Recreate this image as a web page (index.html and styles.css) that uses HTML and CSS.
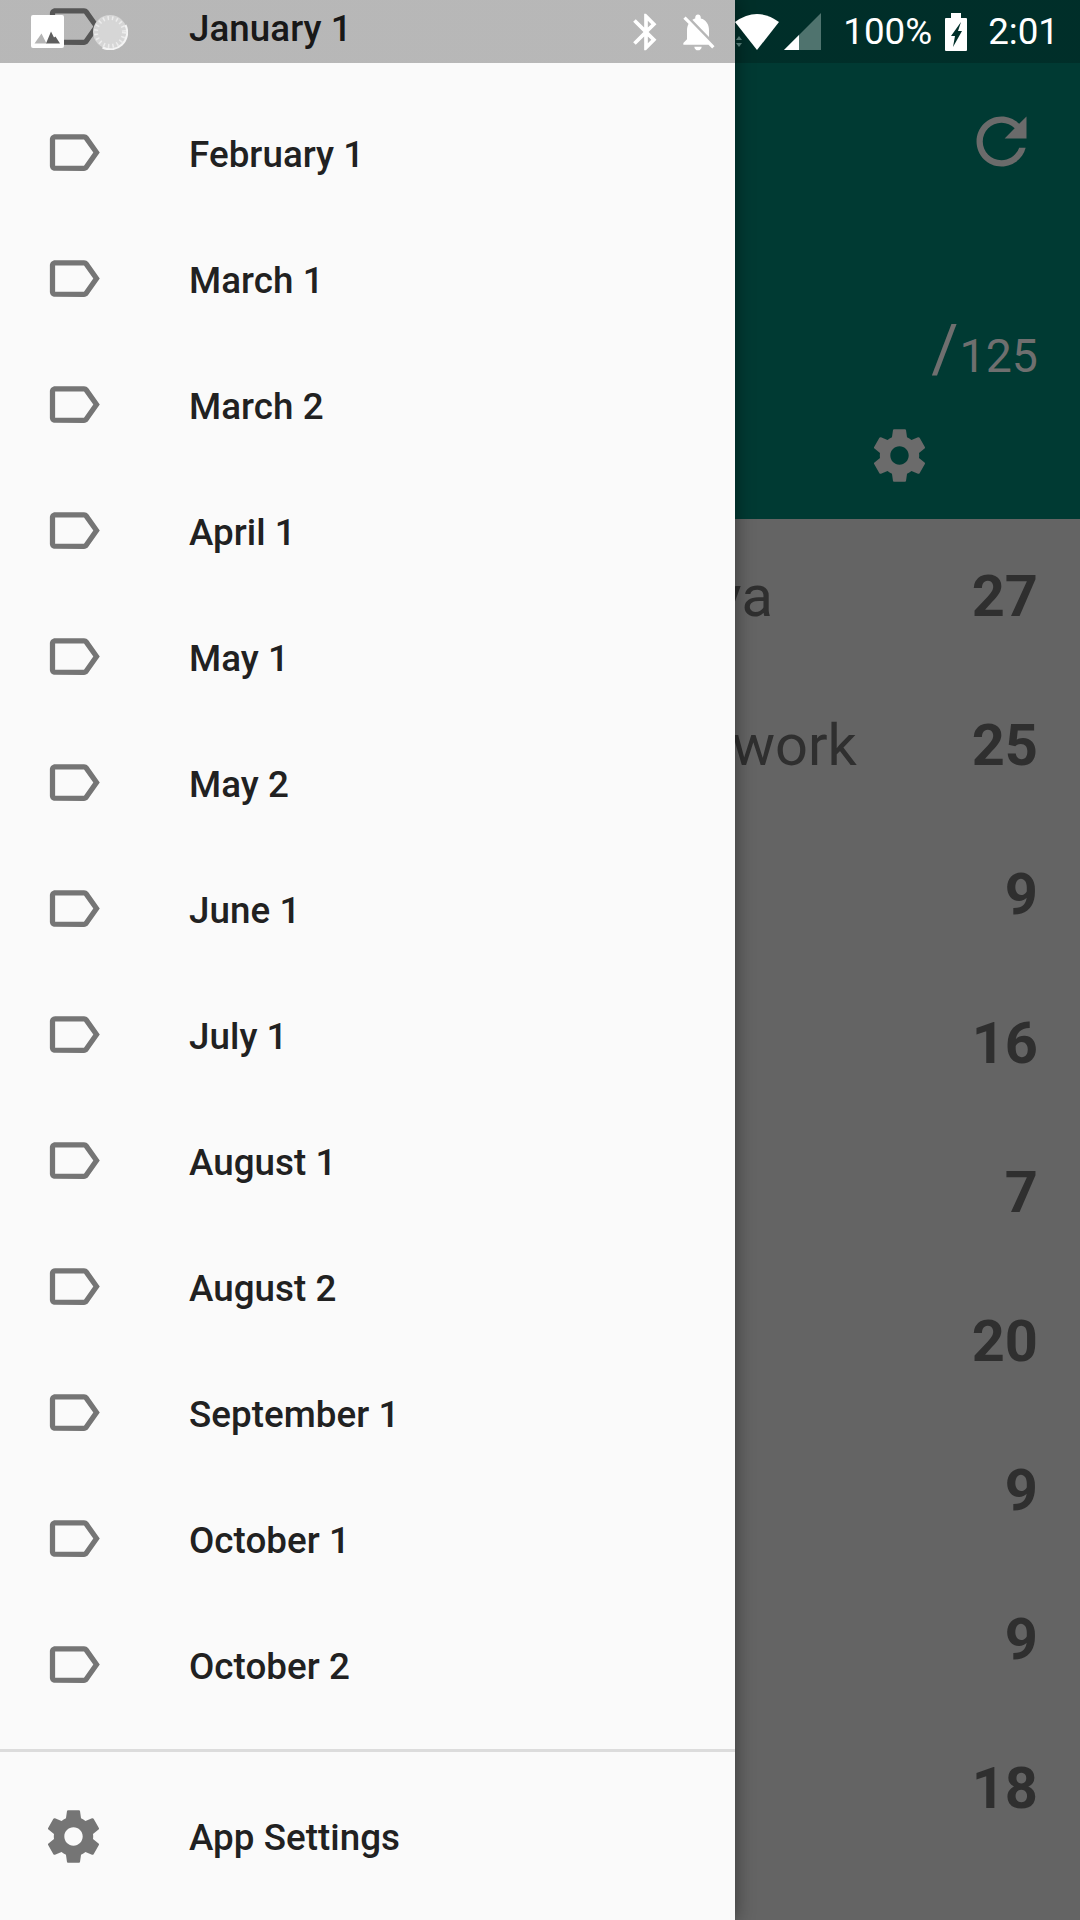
FILE: index.html
```html
<!DOCTYPE html>
<html lang="en">
<head>
<meta charset="utf-8">
<title>Drawer</title>
<link rel="stylesheet" href="styles.css">
</head>
<body>
<div class="screen">
  <main class="app">
    <header class="hero">
      <svg class="refresh" viewBox="0 0 24 24"><path d="M17.65 6.35C16.2 4.9 14.21 4 12 4c-4.42 0-7.99 3.58-7.99 8s3.57 8 7.99 8c3.73 0 6.84-2.55 7.73-6h-2.08c-.82 2.33-3.04 4-5.65 4-3.31 0-6-2.69-6-6s2.69-6 6-6c1.66 0 3.14.69 4.22 1.78L13 11h7V4l-2.35 2.35z"/></svg>
      <div class="ratio"><span class="slash">/</span><span class="total">125</span></div>
      <svg class="hero-gear" viewBox="0 0 24 24"><use href="#gear"/></svg>
    </header>
    <ul class="decks">
      <li class="deck"><span class="deck-name deck-name-a">Java</span><span class="deck-count">27</span></li>
      <li class="deck"><span class="deck-name deck-name-b">Network</span><span class="deck-count">25</span></li>
      <li class="deck"><span class="deck-count">9</span></li>
      <li class="deck"><span class="deck-count">16</span></li>
      <li class="deck"><span class="deck-count">7</span></li>
      <li class="deck"><span class="deck-count">20</span></li>
      <li class="deck"><span class="deck-count">9</span></li>
      <li class="deck"><span class="deck-count">9</span></li>
      <li class="deck"><span class="deck-count">18</span></li>
    </ul>
  </main>

  <nav class="drawer">
    <svg class="defs" width="0" height="0">
      <defs>
        <path id="gear" d="M19.43 12.98c.04-.32.07-.64.07-.98s-.03-.66-.07-.98l2.11-1.65c.19-.15.24-.42.12-.64l-2-3.46c-.12-.22-.39-.3-.61-.22l-2.49 1c-.52-.4-1.08-.73-1.69-.98l-.38-2.65C14.46 2.18 14.25 2 14 2h-4c-.25 0-.46.18-.49.42l-.38 2.65c-.61.25-1.17.59-1.69.98l-2.49-1c-.23-.09-.49 0-.61.22l-2 3.46c-.13.22-.07.49.12.64l2.11 1.65c-.04.32-.07.65-.07.98s.03.66.07.98l-2.11 1.65c-.19.15-.24.42-.12.64l2 3.46c.12.22.39.3.61.22l2.49-1c.52.4 1.08.73 1.69.98l.38 2.65c.03.24.24.42.49.42h4c.25 0 .46-.18.49-.42l.38-2.65c.61-.25 1.17-.59 1.69-.98l2.49 1c.23.09.49 0 .61-.22l2-3.46c.12-.22.07-.49-.12-.64l-2.11-1.65zM12 15.5c-1.93 0-3.5-1.57-3.5-3.5s1.57-3.5 3.5-3.5 3.5 1.57 3.5 3.5-1.57 3.5-3.5 3.5z"/>
        <path id="label" d="M17.63 5.84C17.27 5.33 16.67 5 16 5L5 5.01C3.9 5.01 3 5.9 3 7v10c0 1.1.9 1.99 2 1.99L16 19c.67 0 1.27-.33 1.63-.84L22 12l-4.37-6.16zM16 17H5V7h11l3.55 5L16 17z"/>
      </defs>
    </svg>
    <ul class="nav-list">
      <li class="nav-row"><svg class="nav-icon" viewBox="0 0 24 24"><use href="#label"/></svg><span class="nav-label">January 1</span></li>
      <li class="nav-row"><svg class="nav-icon" viewBox="0 0 24 24"><use href="#label"/></svg><span class="nav-label">February 1</span></li>
      <li class="nav-row"><svg class="nav-icon" viewBox="0 0 24 24"><use href="#label"/></svg><span class="nav-label">March 1</span></li>
      <li class="nav-row"><svg class="nav-icon" viewBox="0 0 24 24"><use href="#label"/></svg><span class="nav-label">March 2</span></li>
      <li class="nav-row"><svg class="nav-icon" viewBox="0 0 24 24"><use href="#label"/></svg><span class="nav-label">April 1</span></li>
      <li class="nav-row"><svg class="nav-icon" viewBox="0 0 24 24"><use href="#label"/></svg><span class="nav-label">May 1</span></li>
      <li class="nav-row"><svg class="nav-icon" viewBox="0 0 24 24"><use href="#label"/></svg><span class="nav-label">May 2</span></li>
      <li class="nav-row"><svg class="nav-icon" viewBox="0 0 24 24"><use href="#label"/></svg><span class="nav-label">June 1</span></li>
      <li class="nav-row"><svg class="nav-icon" viewBox="0 0 24 24"><use href="#label"/></svg><span class="nav-label">July 1</span></li>
      <li class="nav-row"><svg class="nav-icon" viewBox="0 0 24 24"><use href="#label"/></svg><span class="nav-label">August 1</span></li>
      <li class="nav-row"><svg class="nav-icon" viewBox="0 0 24 24"><use href="#label"/></svg><span class="nav-label">August 2</span></li>
      <li class="nav-row"><svg class="nav-icon" viewBox="0 0 24 24"><use href="#label"/></svg><span class="nav-label">September 1</span></li>
      <li class="nav-row"><svg class="nav-icon" viewBox="0 0 24 24"><use href="#label"/></svg><span class="nav-label">October 1</span></li>
      <li class="nav-row"><svg class="nav-icon" viewBox="0 0 24 24"><use href="#label"/></svg><span class="nav-label">October 2</span></li>
    </ul>
    <div class="nav-footer">
      <div class="nav-row"><svg class="nav-icon" viewBox="0 0 24 24"><use href="#gear"/></svg><span class="nav-label nav-label-footer">App Settings</span></div>
    </div>
  </nav>

  <div class="statusbar">
    <svg class="thumb" viewBox="0 0 33 33"><rect width="33" height="33" rx="2" fill="#fff"/><path d="M3.500 28.500l7-10 5 10z" fill="#b5b5b5"/><path d="M15 28.500l5-12 3 6 1.500-1 4.500 7z" fill="#5e5e5e"/></svg>
    <svg class="spinner" viewBox="0 0 36 36"><circle cx="18" cy="18" r="17" fill="#d6d6d6"/><circle cx="18" cy="18" r="14" fill="none" stroke="#ececec" stroke-width="4" stroke-dasharray="1.500 3"/><circle cx="18" cy="18" r="11" fill="#d6d6d6"/><path d="M33.500 11a17 17 0 0 1-23 22.500" fill="none" stroke="#f4f4f4" stroke-width="2"/></svg>
    <svg class="sys-icon sys-bt" viewBox="0 0 24 24"><path d="M17.71 7.71L12 2h-1v7.590L6.410 5 5 6.410 10.590 12 5 17.590 6.410 19 11 14.410V22h1l5.710-5.710-4.300-4.290 4.300-4.290zM13 5.830l1.880 1.880L13 9.590V5.830zm1.880 10.460L13 18.170v-3.760l1.880 1.880z"/></svg>
    <svg class="sys-icon sys-bell" viewBox="0 0 24 24"><path d="M20 18.69L7.84 6.14 5.27 3.49 4 4.76l2.8 2.8v.01c-.52.99-.8 2.16-.8 3.42v5l-2 2v1h13.73l2 2L21 19.72l-1-1.03zM12 22c1.11 0 2-.89 2-2h-4c0 1.11.89 2 2 2zm6-7.32V11c0-3.08-1.64-5.64-4.5-6.32V4c0-.83-.67-1.5-1.5-1.5s-1.5.67-1.5 1.5v.68c-.15.03-.29.08-.42.12-.1.03-.2.07-.3.11h-.01c-.2.08-.4.18-.59.28-.1.05-.2.11-.3.17L18 14.68z"/></svg>
    <svg class="sys-wifi" viewBox="0 0 46 38"><path d="M1 9Q23-7 45 9L23 37z"/><path class="dim" d="M2 27l3-4 3 4zM2 30l3 4 3-4z"/></svg>
    <svg class="sys-signal" viewBox="0 0 37 37"><path class="dim" d="M37 0v37H0z"/><path d="M0 37l15-15v15z"/></svg>
    <span class="status-text status-batt">100%</span>
    <svg class="sys-battery" viewBox="0 0 22 38"><path fill-rule="evenodd" d="M0 6a1 1 0 0 1 1-1h5V0h10v5h5a1 1 0 0 1 1 1v31a1 1 0 0 1-1 1H1a1 1 0 0 1-1-1zM16 9L6 23h4l-2 11 9-16h-4z"/></svg>
    <span class="status-text status-time">2:01</span>
  </div>
</div>
</body>
</html>
```
FILE: styles.css
```css
* { box-sizing: border-box; }
html, body { margin: 0; padding: 0; }
body { font-family: Roboto, "Liberation Sans", sans-serif; background: #646464; }
ul { list-style: none; margin: 0; padding: 0; }

.screen { position: relative; width: 1080px; height: 1920px; overflow: hidden; background: #646464; }

/* dimmed app behind the drawer */
.app { display: flex; flex-direction: column; height: 100%; }
.hero { height: 519px; background: #003a33; padding: 105px 42px 0 0; display: flex; flex-direction: column; align-items: flex-end; }
.refresh { width: 75px; height: 75px; fill: #6b6b6b; margin-right: -1px; margin-top: -1px; }
.ratio { margin-top: 133px; display: flex; align-items: baseline; color: #6f6f6f; font-weight: 400; }
.slash { font-size: 66px; line-height: 76px; }
.total { font-size: 46.5px; line-height: 76px; margin-left: 1px; }
.hero-gear { width: 63px; height: 63px; fill: #6b6b6b; margin-top: 30px; margin-right: 107px; }

.decks { padding-top: 3px; }
.deck { height: 149px; display: flex; align-items: center; padding-right: 42px; color: #2f2f2f; line-height: 149px; }
.deck-name { font-size: 57.75px; font-weight: 400; }
.deck-name-a { margin-left: 651px; }
.deck-name-b { margin-left: 641px; }
.deck-count { margin-left: auto; font-size: 57.75px; font-weight: 700; }

/* drawer */
.drawer { position: absolute; top: 0; left: 0; width: 735px; height: 1920px; background: #fafafa; box-shadow: 0 0 18px rgba(0, 0, 0, .45); overflow: hidden; }
.defs { position: absolute; }
.nav-list { margin-top: -37px; }
.nav-row { height: 126px; display: flex; align-items: center; padding-left: 42px; font-size: 36.75px; font-weight: 500; color: #212121; }
.nav-icon { width: 63px; height: 63px; fill: #757575; margin-right: 84px; flex: none; }
.nav-label { padding-top: 4px; letter-spacing: .05px; }
.nav-label-footer { padding-top: 2px; }
.nav-footer { margin-top: 22px; border-top: 3px solid #dcdcdc; padding: 21px 0; }

/* status bar */
.statusbar { position: absolute; top: 0; left: 0; width: 1080px; height: 63px; display: flex; align-items: center; padding: 0 21px 0 31px; background: linear-gradient(to right, rgba(0, 0, 0, .267) 735px, rgba(0, 0, 0, .2) 735px); color: #fff; }
.thumb { width: 33px; height: 33px; flex: none; margin-top: -1px; }
.spinner { width: 36px; height: 36px; flex: none; margin-left: 28px; margin-top: 1px; }
.sys-icon { width: 44px; height: 44px; fill: #fff; flex: none; }
.sys-bt { margin-left: auto; }
.sys-bell { margin-left: 8px; }
.sys-wifi { width: 46px; height: 38px; fill: #fff; flex: none; margin-left: 14px; }
.sys-wifi .dim { fill: #4f736e; }
.sys-signal { width: 37px; height: 37px; fill: #fff; flex: none; margin-left: 4px; }
.sys-signal .dim { fill: #4f736e; }
.status-text { font-size: 36.75px; font-weight: 400; line-height: 63px; }
.status-batt { margin-left: 22px; }
.sys-battery { width: 22px; height: 38px; fill: #fff; flex: none; margin-left: 13px; }
.status-time { margin-left: 21px; }
```
